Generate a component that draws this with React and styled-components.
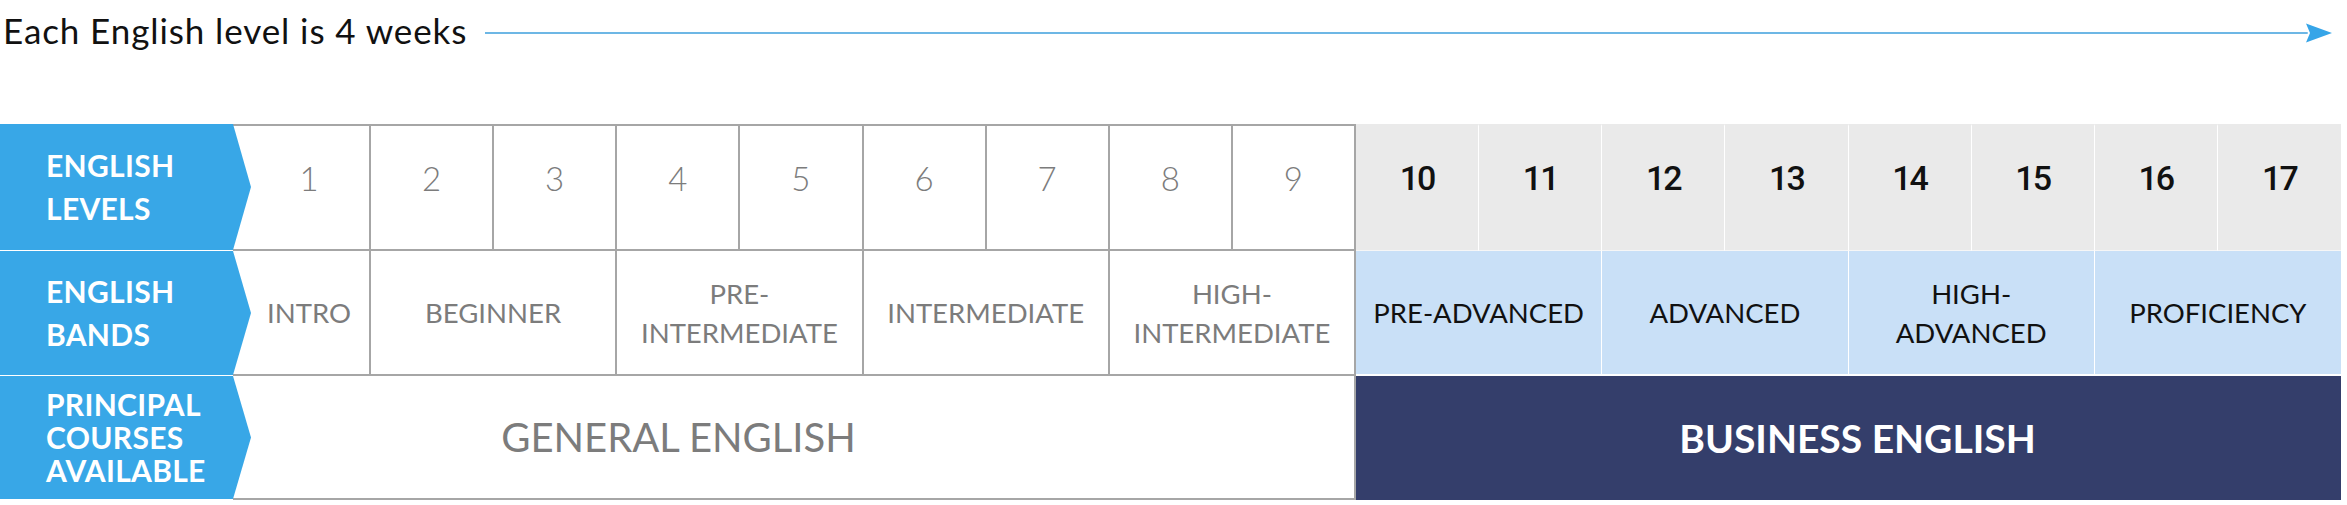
import styled, { createGlobalStyle } from 'styled-components';

const GlobalStyle = createGlobalStyle`
  html, body {
    margin: 0;
    padding: 0;
    background: #ffffff;
  }
  body {
    font-family: Lato, "Open Sans", "Liberation Sans", sans-serif;
  }
`;

const colors = {
  blue: '#38a7e7',
  line: '#a6a6a6',
  grayText: '#7c7c7c',
  grayCell: '#eaeaea',
  lightBlue: '#c9e0f7',
  navy: '#343e6b',
  ink: '#111111',
};

const Page = styled.div`
  width: 2341px;
`;

const Header = styled.div`
  display: flex;
  align-items: center;
  height: 60px;
  padding-left: 3px;
  margin-bottom: 64px;
`;

const Title = styled.h1`
  margin: 0;
  font-size: 35px;
  line-height: 1;
  font-weight: 400;
  letter-spacing: 0.9px;
  color: #111111;
  white-space: nowrap;
`;

const ArrowLine = styled.svg`
  flex: 1;
  height: 20px;
  margin-left: 18px;
  margin-top: 6px;
  display: block;
`;

const ArrowHead = styled.svg`
  width: 26px;
  height: 20px;
  margin-top: 6px;
  margin-left: -2px;
  margin-right: 9px;
  flex: none;
`;

const Table = styled.div`
  display: grid;
  grid-template-columns: 233px 138px repeat(16, 1fr);
  grid-template-rows: 127px 125px 124px;
`;

const Label = styled.div`
  position: relative;
  z-index: 1;
  width: calc(100% + 18px);
  margin-bottom: 1px;
  background: ${colors.blue};
  clip-path: polygon(0 0, calc(100% - 18px) 0, 100% 50%, calc(100% - 18px) 100%, 0 100%);
  display: flex;
  flex-direction: column;
  justify-content: center;
  padding-left: 46px;
  box-sizing: border-box;
  color: #ffffff;
  font-weight: 700;
  font-size: 30px;
  line-height: ${({ $tight }) => ($tight ? '33px' : '43px')};
  letter-spacing: 0.3px;
`;

const Cell = styled.div`
  box-sizing: border-box;
  display: flex;
  align-items: center;
  justify-content: center;
  text-align: center;
  grid-column: span ${({ $span }) => $span || 1};
  padding-left: ${({ $padLeft }) => $padLeft || 0}px;
  padding-right: ${({ $padRight }) => $padRight || 0}px;
`;

const LevelCell = styled(Cell)`
  padding-bottom: 20px;
  font-size: ${({ $dark }) => ($dark ? '34px' : '33px')};
  font-family: ${({ $dark }) => ($dark ? 'Roboto, Lato, sans-serif' : 'Lato, sans-serif')};
  border-top: 2px solid ${({ $dark }) => ($dark ? 'transparent' : colors.line)};
  border-bottom: ${({ $dark }) => ($dark ? '1px solid #f6f6f6' : `2px solid ${colors.line}`)};
  border-right: ${({ $dark, $last }) =>
    $last ? 'none' : $dark ? '1px solid #ffffff' : `2px solid ${colors.line}`};
  background: ${({ $dark }) => ($dark ? colors.grayCell : '#ffffff')};
  color: ${({ $dark }) => ($dark ? colors.ink : colors.grayText)};
  font-weight: ${({ $dark }) => ($dark ? 500 : 300)};
  letter-spacing: ${({ $dark }) => ($dark ? '-2px' : '0')};
`;

const BandCell = styled(Cell)`
  font-size: 27.5px;
  line-height: 39px;
  border-bottom: 2px solid ${({ $dark }) => ($dark ? '#ffffff' : colors.line)};
  border-right: ${({ $dark, $last }) =>
    $last ? 'none' : $dark ? '1px solid #ffffff' : `2px solid ${colors.line}`};
  background: ${({ $dark }) => ($dark ? colors.lightBlue : '#ffffff')};
  color: ${({ $dark }) => ($dark ? colors.ink : colors.grayText)};
  font-weight: 400;
`;

const CourseCell = styled(Cell)`
  font-size: ${({ $dark }) => ($dark ? '39px' : '40px')};
  border-bottom: ${({ $dark }) => ($dark ? 'none' : `2px solid ${colors.line}`)};
  border-right: ${({ $dark }) => ($dark ? 'none' : `2px solid ${colors.line}`)};
  background: ${({ $dark }) => ($dark ? colors.navy : '#ffffff')};
  color: ${({ $dark }) => ($dark ? '#ffffff' : colors.grayText)};
  font-weight: ${({ $dark }) => ($dark ? 700 : 400)};
`;

const levels = Array.from({ length: 17 }, (_, i) => i + 1);

const bands = [
  { lines: ['INTRO'], span: 1 },
  { lines: ['BEGINNER'], span: 2 },
  { lines: ['PRE-', 'INTERMEDIATE'], span: 2 },
  { lines: ['INTERMEDIATE'], span: 2 },
  { lines: ['HIGH-', 'INTERMEDIATE'], span: 2 },
  { lines: ['PRE-ADVANCED'], span: 2, dark: true },
  { lines: ['ADVANCED'], span: 2, dark: true },
  { lines: ['HIGH-', 'ADVANCED'], span: 2, dark: true },
  { lines: ['PROFICIENCY'], span: 2, dark: true, last: true },
];

const Arrow = () => (
  <ArrowLine viewBox="0 0 1000 20" preserveAspectRatio="none">
    <line x1="0" y1="10" x2="1000" y2="10" stroke="#3d9fdc" strokeWidth="1.6" vectorEffect="non-scaling-stroke" />
  </ArrowLine>
);

export default function App() {
  return (
    <Page>
      <GlobalStyle />
      <Header>
        <Title>Each English level is 4 weeks</Title>
        <Arrow />
        <ArrowHead viewBox="0 0 26 20">
          <path d="M0 0.5 L26 10 L0 19.5 L4 10 Z" fill="#36a5e8" />
        </ArrowHead>
      </Header>
      <Table>
        <Label>
          <span>ENGLISH</span>
          <span>LEVELS</span>
        </Label>
        {levels.map((n) => (
          <LevelCell key={n} $dark={n >= 10} $last={n === 17} $padLeft={n === 1 ? 16 : 0}>
            {n}
          </LevelCell>
        ))}

        <Label>
          <span>ENGLISH</span>
          <span>BANDS</span>
        </Label>
        {bands.map((b, i) => (
          <BandCell key={i} $span={b.span} $dark={b.dark} $last={b.last} $padLeft={i === 0 ? 16 : 0}>
            <div>
              {b.lines.map((l) => (
                <div key={l}>{l}</div>
              ))}
            </div>
          </BandCell>
        ))}

        <Label $tight>
          <span>PRINCIPAL</span>
          <span>COURSES</span>
          <span>AVAILABLE</span>
        </Label>
        <CourseCell $span={9} $padRight={230}>GENERAL ENGLISH</CourseCell>
        <CourseCell $span={8} $dark $padLeft={18}>BUSINESS ENGLISH</CourseCell>
      </Table>
    </Page>
  );
}
